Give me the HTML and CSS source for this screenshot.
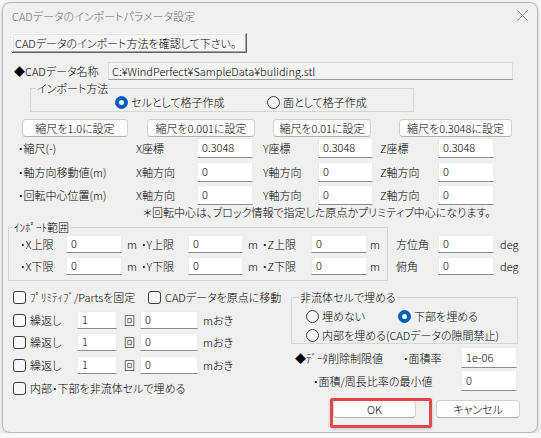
FILE: index.html
```html
<!DOCTYPE html>
<html lang="ja">
<head>
<meta charset="utf-8">
<title>CADデータのインポートパラメータ設定</title>
<link rel="stylesheet" href="styles.css">
</head>
<body>
<div class="window">
  <div class="titlebar">
    <span class="title">CADデータのインポートパラメータ設定</span>
    <svg class="close" width="11" height="11" viewBox="0 0 11 11"><path d="M0.5 0.5L10.5 10.5M10.5 0.5L0.5 10.5" stroke="#8a8a8a" stroke-width="1"/></svg>
  </div>
  <div class="content">
    <div class="row row-confirm"><button class="btn-classic">CADデータのインポート方法を確認して下さい。</button></div>
    <div class="row row-name"><span class="name-label">◆CADデータ名称</span><div class="path-field">C:¥WindPerfect¥SampleData¥buliding.stl</div></div>
    <fieldset class="group group-method">
      <legend>インポート方法</legend>
      <div class="radio-row">
        <label class="opt opt-cell"><span class="radio checked"></span>セルとして格子作成</label>
        <label class="opt"><span class="radio"></span>面として格子作成</label>
      </div>
    </fieldset>
    <div class="row row-scale">
      <button class="btn btn-s1">縮尺を1.0に設定</button>
      <button class="btn btn-s2">縮尺を0.001に設定</button>
      <button class="btn btn-s3">縮尺を0.01に設定</button>
      <button class="btn btn-s4">縮尺を0.3048に設定</button>
    </div>
    <div class="row xyz-row xyz-1">
      <span class="xyz-label">・縮尺(-)</span>
      <span class="ax ax-x">X座標</span><input class="field fx" value="0.3048">
      <span class="ax ax-y">Y座標</span><input class="field fy" value="0.3048">
      <span class="ax ax-z">Z座標</span><input class="field fz" value="0.3048">
    </div>
    <div class="row xyz-row xyz-2">
      <span class="xyz-label">・軸方向移動値(m)</span>
      <span class="ax ax-x">X軸方向</span><input class="field fx" value="0">
      <span class="ax ax-y">Y軸方向</span><input class="field fy" value="0">
      <span class="ax ax-z">Z軸方向</span><input class="field fz" value="0">
    </div>
    <div class="row xyz-row xyz-3">
      <span class="xyz-label">・回転中心位置(m)</span>
      <span class="ax ax-x">X軸方向</span><input class="field fx" value="0">
      <span class="ax ax-y">Y軸方向</span><input class="field fy" value="0">
      <span class="ax ax-z">Z軸方向</span><input class="field fz" value="0">
    </div>
    <div class="note">＊回転中心は、ブロック情報で指定した原点かプリミティブ中心になります。</div>
    <div class="row row-range">
      <fieldset class="group group-range">
        <legend>ｲﾝﾎﾟｰﾄ範囲</legend>
        <div class="rng-row rng-1">
          <span class="rl rl-x">・X上限</span><input class="field rx" value="0"><span class="unit">m</span>
          <span class="rl rl-y">・Y上限</span><input class="field ry" value="0"><span class="unit">m</span>
          <span class="rl rl-z">・Z上限</span><input class="field rz" value="0"><span class="unit unit-z">m</span>
        </div>
        <div class="rng-row rng-2">
          <span class="rl rl-x">・X下限</span><input class="field rx" value="0"><span class="unit">m</span>
          <span class="rl rl-y">・Y下限</span><input class="field ry" value="0"><span class="unit">m</span>
          <span class="rl rl-z">・Z下限</span><input class="field rz" value="0"><span class="unit unit-z">m</span>
        </div>
      </fieldset>
      <div class="angles">
        <div class="ang-row ang-1"><span class="ang-label">方位角</span><input class="field fa" value="0"><span class="deg">deg</span></div>
        <div class="ang-row ang-2"><span class="ang-label">俯角</span><input class="field fa" value="0"><span class="deg">deg</span></div>
      </div>
    </div>
    <div class="lower">
      <div class="lower-left">
        <div class="chk-row chk-top">
          <label class="chk-item chk-fix"><span class="checkbox"></span>ﾌﾟﾘﾐﾃｨﾌﾞ/Partsを固定</label>
          <label class="chk-item"><span class="checkbox"></span>CADデータを原点に移動</label>
        </div>
        <div class="rep-row rep-1">
          <label class="rep-check"><span class="checkbox"></span>繰返し</label>
          <input class="field rep-n" value="1"><span class="times">回</span><input class="field rep-d" value="0"><span class="every">mおき</span>
        </div>
        <div class="rep-row rep-2">
          <label class="rep-check"><span class="checkbox"></span>繰返し</label>
          <input class="field rep-n" value="1"><span class="times">回</span><input class="field rep-d" value="0"><span class="every">mおき</span>
        </div>
        <div class="rep-row rep-3">
          <label class="rep-check"><span class="checkbox"></span>繰返し</label>
          <input class="field rep-n" value="1"><span class="times">回</span><input class="field rep-d" value="0"><span class="every">mおき</span>
        </div>
        <div class="chk-row chk-bottom">
          <label class="chk-item"><span class="checkbox"></span>内部・下部を非流体セルで埋める</label>
        </div>
      </div>
      <div class="lower-right">
        <fieldset class="group group-fill">
          <legend>非流体セルで埋める</legend>
          <div class="fill-row fill-1">
            <label class="opt opt-none"><span class="radio"></span>埋めない</label>
            <label class="opt"><span class="radio checked"></span>下部を埋める</label>
          </div>
          <div class="fill-row fill-2">
            <label class="opt"><span class="radio"></span>内部を埋める(CADデータの隙間禁止)</label>
          </div>
        </fieldset>
        <div class="lim-row lim-1"><span class="lim-title">◆ﾃﾞｰﾀ削除制限値</span><span class="lim-label">・面積率</span><input class="field fl" value="1e-06"></div>
        <div class="lim-row lim-2"><span class="lim-label2">・面積/周長比率の最小値</span><input class="field fl" value="0"></div>
      </div>
    </div>
    <div class="row row-buttons">
      <button class="btn btn-ok">OK</button>
      <button class="btn btn-cancel">キャンセル</button>
    </div>
  </div>
</div>
</body>
</html>
```

FILE: styles.css
```css
* { box-sizing: border-box; }
html, body { margin: 0; padding: 0; }
body {
  background: #f8f8f8;
  font-family: "Noto Sans CJK JP", "Noto Sans", sans-serif;
  font-size: 11px;
  font-weight: 300;
  line-height: 14px;
  color: #000;
  font-feature-settings: "palt" 1;
}
.window {
  margin: 2px 0 0 2px;
  width: 536px;
  height: 431px;
  border: 1px solid #b8b8b8;
  border-radius: 8px;
  background: #f0f0f0;
  box-shadow: 0 2px 6px rgba(0,0,0,0.18);
  overflow: hidden;
}
.titlebar {
  height: 25px;
  display: flex;
  align-items: center;
  justify-content: space-between;
  padding: 0 9px 0 9px;
  color: #6e6e6e;
}
.close { display: block; }
.content { padding-left: 5px; }
.row { display: flex; align-items: center; }
button, input { font: inherit; color: inherit; margin: 0; }

.btn-classic {
  margin: 5px 0 0 4px;
  width: 235px;
  height: 20px;
  padding: 0 0 0 3px;
  text-align: left;
  white-space: nowrap;
  background: #f5f5f5;
  border: none;
  box-shadow: inset -1px -1px #646464, inset 1px 1px #fff, inset -2px -2px #a0a0a0, inset 2px 2px #e3e3e3;
}
.row-name { margin-top: 9px; height: 18px; }
.name-label { padding-left: 6px; width: 100px; }
.path-field {
  width: 405px;
  height: 18px;
  padding-left: 3px;
  background: #f4f4f4;
  border: 1px solid #dcdcdc;
  border-bottom-color: #9a9a9a;
  line-height: 16px;
}

.group {
  margin: 0;
  padding: 0;
  min-inline-size: 0;
  border: 1px solid #d6d6d6;
}
.group legend { padding: 0 1px; line-height: 14px; }
.group-method { margin: 1px 0 0 22px; width: 384px; height: 31px; }
.group-method legend { margin-left: 5px; }
.radio-row { display: flex; align-items: center; height: 12px; margin-top: 1px; padding-left: 84px; }
.opt { display: flex; align-items: center; white-space: nowrap; }
.opt-cell { width: 152px; }
.radio {
  width: 13px; height: 13px;
  border: 1px solid #3c3c3c;
  border-radius: 50%;
  background: #f7f7f7;
  margin-right: 3px;
  flex: none;
  position: relative;
}
.radio.checked { background: #005fb8; border-color: #005fb8; }
.radio.checked::after {
  content: ""; position: absolute; left: 3px; top: 3px;
  width: 5px; height: 5px; border-radius: 50%; background: #fff;
}
.checkbox {
  width: 13px; height: 13px;
  border: 1px solid #3c3c3c;
  border-radius: 3px;
  background: #f7f7f7;
  margin-right: 4px;
  flex: none;
}

.btn {
  height: 18px;
  padding: 0;
  background: #fdfdfd;
  border: 1px solid #d0d0d0;
  border-bottom-color: #b2b2b2;
  border-radius: 4px;
  text-align: center;
  line-height: 14px;
}
.row-scale { margin-top: 7px; height: 18px; }
.btn-s1 { margin-left: 14px; width: 106px; }
.btn-s2 { margin-left: 19px; width: 108px; }
.btn-s3 { margin-left: 18px; width: 98px; }
.btn-s4 { margin-left: 28px; width: 113px; }

.field {
  height: 20px;
  padding: 0 0 2px 4px;
  background: #fff;
  border: 1px solid #ececec;
  border-bottom-color: #8c8c8c;
  outline: none;
}
.xyz-row { height: 20px; }
.xyz-1 { margin-top: 1px; }
.xyz-2 { margin-top: 4px; }
.xyz-3 { margin-top: 3px; }
.xyz-label { padding-left: 10px; width: 128px; }
.ax-x { width: 61px; }
.ax-y { margin-left: 10px; width: 55px; }
.ax-z { margin-left: 7px; width: 58px; }
.fx { width: 56px; }
.fy { width: 55px; }
.fz { width: 56px; }
.note { padding-left: 135px; height: 14px; white-space: nowrap; }

.row-range { margin-top: 1px; align-items: flex-start; }
.group-range { width: 380px; height: 61px; }
.group-range legend { margin-left: 4px; }
.rng-row { display: flex; align-items: center; height: 18px; }
.rng-1 { margin-top: 1px; }
.rng-2 { margin-top: 4px; }
.rng-row .field { height: 18px; }
.rl-x { padding-left: 11px; width: 57px; }
.rl-y { width: 47px; }
.rl-z { width: 49px; }
.rx { width: 56px; }
.ry { width: 55px; }
.rz { width: 56px; }
.unit { margin-left: 5px; width: 14px; }
.unit-z { margin-left: 3px; }
.angles { margin-left: 8px; padding-top: 15px; }
.ang-row { display: flex; align-items: center; height: 18px; }
.ang-2 { margin-top: 4px; }
.ang-row .field { height: 18px; }
.ang-label { width: 42px; }
.fa { width: 56px; }
.deg { margin-left: 6px; }

.lower { display: flex; align-items: flex-start; }
.lower-left { width: 283px; }
.lower-right { width: 227px; }
.chk-row { display: flex; align-items: center; height: 16px; padding-left: 5px; }
.chk-top { margin-top: 8px; }
.chk-bottom { margin-top: 6px; }
.chk-item { display: flex; align-items: center; white-space: nowrap; }
.chk-fix { width: 135px; }
.rep-row { display: flex; align-items: center; height: 18px; padding-left: 5px; }
.rep-row .field { height: 18px; }
.rep-1 { margin-top: 6px; }
.rep-2 { margin-top: 4px; }
.rep-3 { margin-top: 5px; }
.rep-check { display: flex; align-items: center; width: 64px; }
.rep-n { width: 40px; }
.times { margin-left: 7px; width: 16px; }
.rep-d { width: 58px; }
.every { margin-left: 5px; }

.group-fill { margin-top: 9px; width: 227px; height: 54px; }
.group-fill legend { margin-left: 7px; }
.fill-row { display: flex; align-items: center; height: 14px; padding-left: 14px; }
.fill-1 { margin-top: 5px; }
.fill-2 { margin-top: 5px; }
.opt-none { width: 92px; }
.lim-row { display: flex; align-items: center; height: 21px; }
.lim-row .field { height: 21px; }
.lim-1 { margin-top: 3px; }
.lim-2 { margin-top: 2px; }
.lim-title { padding-left: 4px; width: 112px; white-space: nowrap; }
.lim-label { width: 58px; }
.lim-label2 { padding-left: 22px; width: 170px; white-space: nowrap; }
.fl { width: 56px; }

.row-buttons { margin-top: 4px; height: 18px; padding-left: 325px; }
.btn-ok { width: 83px; position: relative; }
.btn-ok::after {
  content: "";
  position: absolute;
  left: -4px; top: -3px;
  width: 96px; height: 24px;
  border: 3px solid #e2494e;
  border-radius: 2px;
  box-shadow: 0 1px 3px rgba(0,0,0,0.2);
}
.btn-cancel { margin-left: 20px; width: 84px; }
```
